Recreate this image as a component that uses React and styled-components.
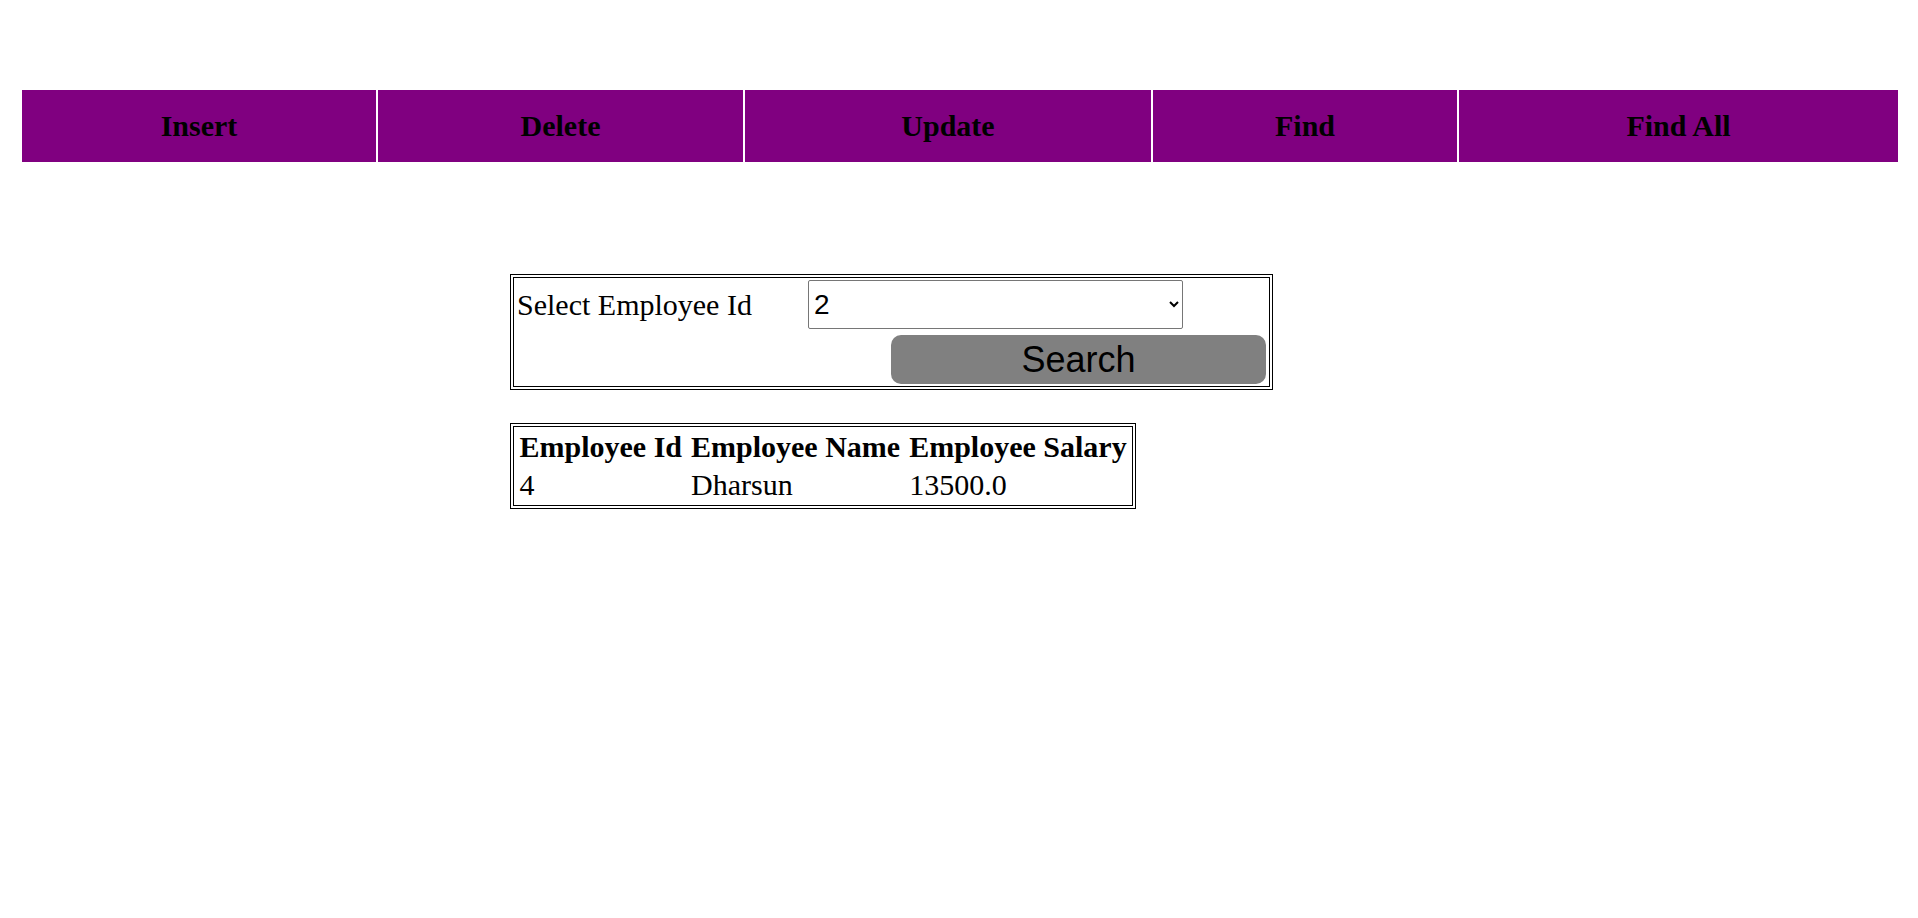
import React from "react";
import styled, { createGlobalStyle } from "styled-components";

const GlobalStyle = createGlobalStyle`
  html, body { margin: 0; padding: 0; background: #ffffff; }
  body { font-family: "Liberation Serif", "Times New Roman", serif; color: #000; }
`;

const Page = styled.div`
  padding: 90px 20px 0 22px;
`;

const Nav = styled.nav`
  display: grid;
  grid-template-columns: 354fr 365fr 406fr 304fr 439fr;
  column-gap: 2px;
  background: #ffffff;
`;

const NavItem = styled.a`
  display: flex;
  align-items: center;
  justify-content: center;
  height: 72px;
  background: #800080;
  color: #000;
  font-family: "Liberation Serif", "Times New Roman", serif;
  font-weight: bold;
  font-size: 30px;
  text-decoration: none;
  cursor: pointer;
`;

const Main = styled.main`
  display: flex;
  flex-direction: column;
  align-items: flex-start;
  margin: 112px 0 0 488px;
  gap: 33px;
`;

const SearchPanel = styled.form`
  box-sizing: border-box;
  width: 763px;
  border: 4px double #000;
  padding: 2px;
  display: grid;
  grid-template-columns: 286px 1fr;
  column-gap: 6px;
  row-gap: 6px;
  margin: 0;
`;

const Label = styled.label`
  align-self: center;
  padding-left: 1px;
  font-family: "Liberation Serif", "Times New Roman", serif;
  font-size: 30px;
`;

const Select = styled.select`
  justify-self: start;
  box-sizing: border-box;
  width: 375px;
  height: 49px;
  border: 1px solid #767676;
  border-radius: 2px;
  background: #fff;
  padding: 0 1px;
  font-family: "Liberation Sans", Arial, sans-serif;
  font-size: 28px;
  color: #000;
`;

const SearchButton = styled.button`
  grid-column: 2;
  justify-self: end;
  margin-right: 1px;
  box-sizing: border-box;
  width: 375px;
  height: 49px;
  border: none;
  border-radius: 10px;
  background: #808080;
  color: #000;
  font-family: "Liberation Sans", Arial, sans-serif;
  font-size: 36px;
  line-height: 49px;
  padding: 0;
  cursor: pointer;
`;

const ResultTable = styled.table`
  border: 4px double #000;
  border-spacing: 2px;
  font-family: "Liberation Serif", "Times New Roman", serif;
  font-size: 30px;
`;

const Th = styled.th`
  padding: 1px 3.5px;
  line-height: 34px;
  font-weight: bold;
  text-align: center;
`;

const Td = styled.td`
  padding: 1px 3.5px;
  line-height: 34px;
  text-align: left;
`;

const navItems = ["Insert", "Delete", "Update", "Find", "Find All"];

export default function App() {
  return (
    <>
      <GlobalStyle />
      <Page>
        <Nav>
          {navItems.map((item) => (
            <NavItem key={item}>{item}</NavItem>
          ))}
        </Nav>
        <Main>
          <SearchPanel onSubmit={(e) => e.preventDefault()}>
            <Label htmlFor="empId">Select Employee Id</Label>
            <Select id="empId" defaultValue="2">
              <option value="1">1</option>
              <option value="2">2</option>
              <option value="3">3</option>
              <option value="4">4</option>
            </Select>
            <SearchButton type="submit">Search</SearchButton>
          </SearchPanel>
          <ResultTable>
            <thead>
              <tr>
                <Th>Employee Id</Th>
                <Th>Employee Name</Th>
                <Th>Employee Salary</Th>
              </tr>
            </thead>
            <tbody>
              <tr>
                <Td>4</Td>
                <Td>Dharsun</Td>
                <Td>13500.0</Td>
              </tr>
            </tbody>
          </ResultTable>
        </Main>
      </Page>
    </>
  );
}
